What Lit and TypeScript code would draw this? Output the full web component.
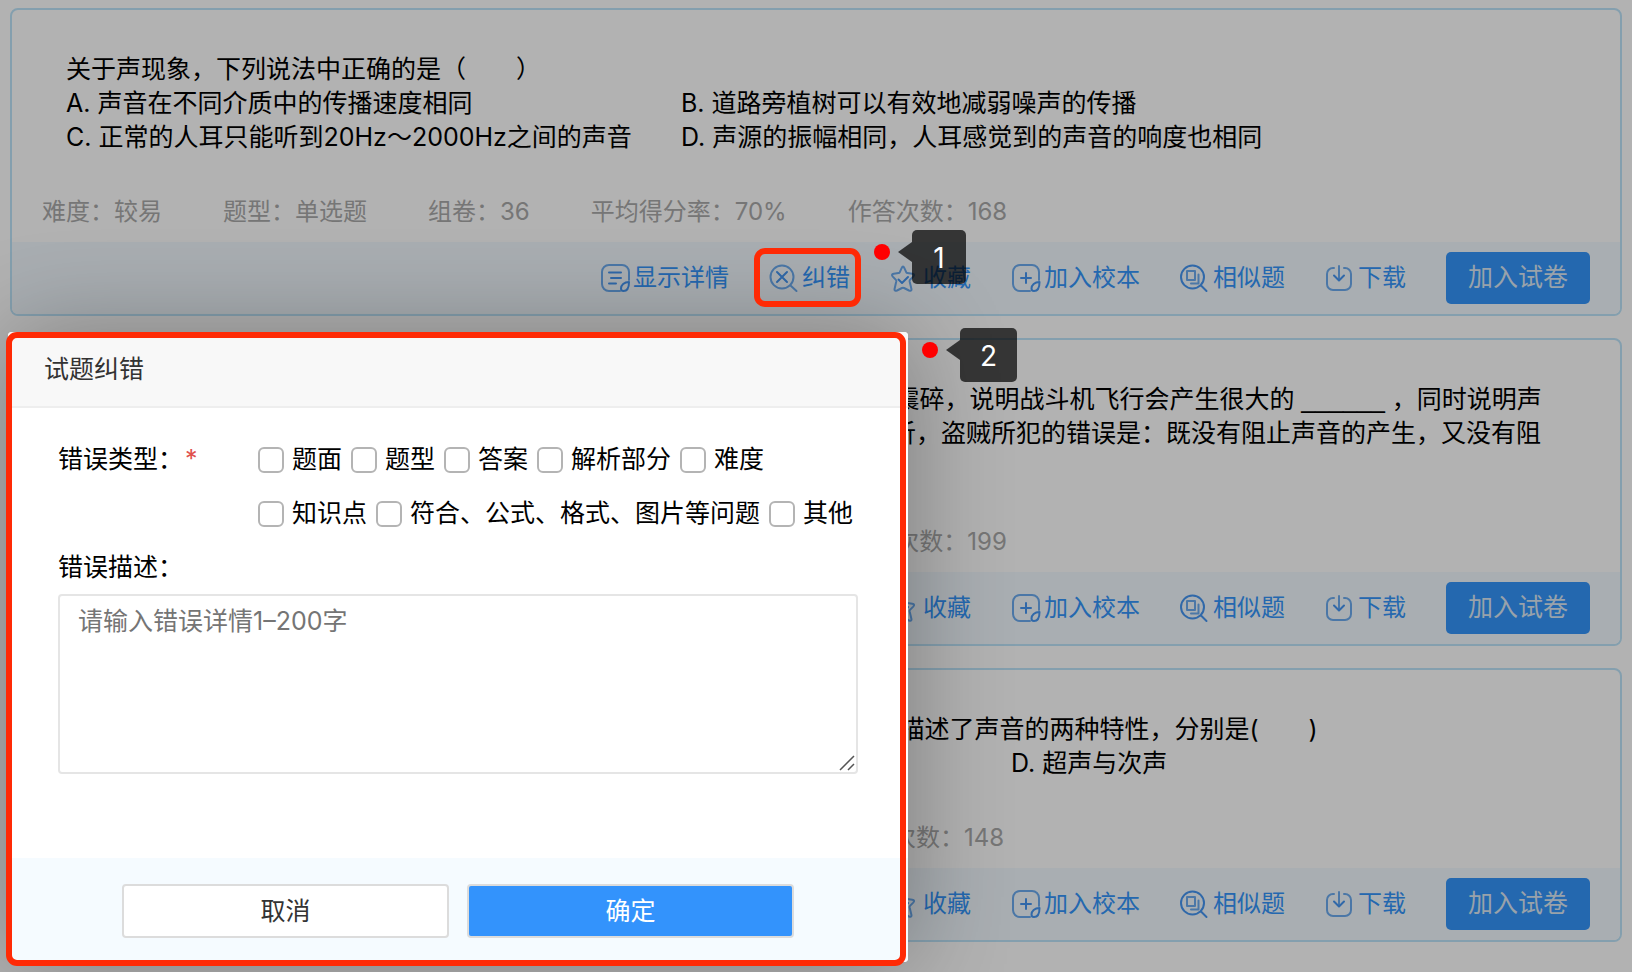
import { LitElement, html, svg, css } from "lit";
import { customElement, property } from "lit/decorators.js";

const glyphs: Record<string, unknown> = {
  detail: svg`
    <path d="M20 27H9a7 7 0 0 1-7-7V8a7 7 0 0 1 7-7h13a7 7 0 0 1 7 7v8" />
    <path class="strong" d="M9 8.500h12M11 14h10M9 19.500h7" />
    <path class="strong" d="M29 18c-5 0-8 3-8 6.500c0 1.500 1 2.500 2.500 2.500c3.500 0 5.500-3.500 5.500-9z" />`,
  wrong: svg`
    <circle cx="13" cy="13" r="11.500" />
    <path d="M21.500 21.500L27.500 27" />
    <path class="strong" d="M8 8l10 10M18 8L8 18" />`,
  star: svg`
    <path d="M11.600 4.200Q13 1 14.400 4.200L16.300 8.300Q16.600 9 17.400 9.100L22.300 9.700Q25.400 10.200 23.200 12.600L20 15.900Q19.500 16.400 19.600 17.200L21.500 25.200Q21.500 27.300 19 26.500L14 24Q13 23.500 12 24L7 26.500Q4.500 27.300 4.500 25.200L6.300 17.200Q6.400 16.400 5.900 15.900L2.800 12.600Q.800 10.200 3.700 9.700L8.600 9.100Q9.400 9 9.700 8.300Z" />
    <path class="strong" d="M8.500 15.500l3.500 3.500l6-6" />`,
  school: svg`
    <path d="M19 27H9a7 7 0 0 1-7-7V8a7 7 0 0 1 7-7h12a7 7 0 0 1 7 7v8" />
    <path class="strong" d="M15 9v10M10 14h10" />
    <path class="strong" d="M28.500 18c-5 0-8 3-8 6.500c0 1.500 1 2.500 2.500 2.500c3.500 0 5.500-3.500 5.500-9z" />`,
  similar: svg`
    <circle class="strong" cx="12.500" cy="13" r="11.500" />
    <path class="strong" d="M21 21.500L26.500 27" />
    <path d="M7 7h8v9H7zM11 19.500h7.500V10.500" />`,
  download: svg`
    <path d="M9 4H8a6 6 0 0 0-6 6v10a6 6 0 0 0 6 6h12a6 6 0 0 0 6-6V10a6 6 0 0 0-6-6h-1" />
    <path d="M14 2v13" />
    <path class="strong" d="M9 11.500l5 5l5-5" />`,
};

const actions: [string, string][] = [
  ["detail", "显示详情"],
  ["wrong", "纠错"],
  ["star", "收藏"],
  ["school", "加入校本"],
  ["similar", "相似题"],
  ["download", "下载"],
];

interface Question {
  lines: unknown[];
  options: string[];
  layout: string;
  stats: [string, string][];
}

const questions: Question[] = [
  {
    lines: ["关于声现象，下列说法中正确的是（　　）"],
    options: [
      "A. 声音在不同介质中的传播速度相同",
      "B. 道路旁植树可以有效地减弱噪声的传播",
      "C. 正常的人耳只能听到20Hz～2000Hz之间的声音",
      "D. 声源的振幅相同，人耳感觉到的声音的响度也相同",
    ],
    layout: "two",
    stats: [["难度", "较易"], ["题型", "单选题"], ["组卷", "36"], ["平均得分率", "70%"], ["作答次数", "168"]],
  },
  {
    lines: [
      html`(1)我国空军某型战斗机在超低空高速飞行时，会把沿途的房屋建筑物的玻璃震碎，说明战斗机飞行会产生很大的<span class="blank"> ______ </span>，同时说明声`,
      "音能够传递能量；掩耳盗铃是大家熟悉的成语故事，从物理学的角度进行分析，盗贼所犯的错误是：既没有阻止声音的产生，又没有阻",
      "止声音的传播，只是阻止声音进入自己的耳朵。",
    ],
    options: [],
    layout: "two",
    stats: [["难度", "较易"], ["题型", "填空题"], ["组卷", "28"], ["平均得分率", "72%"], ["作答次数", "199"]],
  },
  {
    lines: [
      "(2)成语震耳欲聋和尖锐刺耳都是日常生活中人们经常使用的词语，它们各自描述了声音的两种特性，分别是(　　)",
    ],
    options: ["A. 响度与音调", "B. 音调与音色", "C. 响度与音色", "D. 超声与次声"],
    layout: "four",
    stats: [["难度", "较易"], ["题型", "单选题"], ["组卷", "31"], ["平均得分率", "68%"], ["作答次数", "148"]],
  },
];

@customElement("question-card")
class QuestionCard extends LitElement {
  @property({ attribute: false }) question!: Question;

  static styles = css`
    :host {
      display: block;
      border: 2px solid #bde4fa;
      border-radius: 8px;
      overflow: hidden;
      background: #fff;
    }
    .stem {
      padding: 42px 54px 41px;
      font-size: 25px;
      line-height: 34px;
      color: #000;
    }
    .line {
      margin: 0;
      white-space: nowrap;
    }
    .blank { font-family: "Liberation Sans", sans-serif; }
    .options {
      display: grid;
      margin: 0;
      padding: 0;
      list-style: none;
      white-space: nowrap;
    }
    .two { grid-template-columns: 41% 1fr; }
    .four { grid-template-columns: repeat(4, 21%); }
    .stats {
      display: flex;
      gap: 61px;
      padding: 0 30px 13px;
      font-size: 24px;
      line-height: 34px;
      color: #aaa;
      white-space: nowrap;
    }
    .bar {
      display: flex;
      align-items: center;
      justify-content: flex-end;
      gap: 40px;
      padding: 10px 30px;
      background: #f3faff;
    }
    button {
      font: inherit;
      border: 0;
      padding: 0;
      cursor: pointer;
      white-space: nowrap;
    }
    .action {
      display: flex;
      align-items: center;
      gap: 5px;
      background: none;
      font-size: 24px;
      line-height: 34px;
      color: #3495fb;
    }
    .icon {
      width: 28px;
      height: 28px;
      overflow: visible;
      fill: none;
      stroke: #6cabef;
      stroke-width: 2;
      stroke-linecap: round;
      stroke-linejoin: round;
    }
    .strong { stroke: #4596f2; }
    .add {
      width: 144px;
      height: 52px;
      padding-bottom: 6px;
      border-radius: 5px;
      background: #3495fb;
      color: #dce8f4;
      font-size: 25px;
    }
  `;

  render() {
    const q = this.question;
    return html`
      <div class="stem">
        ${q.lines.map((line) => html`<p class="line">${line}</p>`)}
        ${q.options.length
          ? html`<ul class="options ${q.layout}">${q.options.map((o) => html`<li>${o}</li>`)}</ul>`
          : ""}
      </div>
      <div class="stats">${q.stats.map(([k, v]) => html`<span>${k}：${v}</span>`)}</div>
      <div class="bar">
        ${actions.map(
          ([icon, label]) => html`<button class="action" type="button">
            <svg class="icon" viewBox="0 0 28 28" aria-hidden="true">${glyphs[icon]}</svg>${label}
          </button>`
        )}
        <button class="add" type="button">加入试卷</button>
      </div>
    `;
  }
}

@customElement("report-dialog")
class ReportDialog extends LitElement {
  static styles = css`
    :host {
      display: block;
      background: #fff;
      border-radius: 4px;
      box-shadow: 2px 2px 100px rgba(0, 0, 0, 0.3);
      font-size: 25px;
    }
    .title {
      margin: 0;
      padding: 20px 36px;
      border-bottom: 2px solid #eee;
      border-radius: 4px 4px 0 0;
      background: #f8f8f8;
      color: #333;
      font-size: 25px;
      font-weight: 400;
      line-height: 34px;
    }
    .body {
      padding: 24px 50px 84px;
      line-height: 54px;
      color: #000;
    }
    .types {
      display: grid;
      grid-template-columns: 200px 1fr;
      margin: 0;
      padding: 0;
      border: 0;
    }
    .star {
      margin-left: 2px;
      color: #e0504d;
    }
    .row {
      display: flex;
      gap: 9px;
      white-space: nowrap;
    }
    .choice {
      display: flex;
      align-items: center;
      gap: 8px;
    }
    .box {
      appearance: none;
      box-sizing: border-box;
      width: 26px;
      height: 26px;
      margin: 2px 0 0;
      border: 2px solid #b4b4b4;
      border-radius: 6px;
      background: #fff;
    }
    .box:checked { background: #3495fb; }
    .caption { display: block; }
    .text {
      display: block;
      box-sizing: border-box;
      width: 100%;
      height: 180px;
      padding: 8px 18px;
      border: 2px solid #e5e5e5;
      border-radius: 4px;
      font: inherit;
      line-height: 34px;
      resize: none;
    }
    .text::placeholder { color: #757575; }
    .field { position: relative; }
    .grip {
      position: absolute;
      right: 3px;
      bottom: 3px;
      width: 16px;
      height: 16px;
      stroke: #555;
      stroke-width: 1.500;
      pointer-events: none;
    }
    .foot {
      display: flex;
      gap: 18px;
      padding: 26px 114px 24px;
      border-radius: 0 0 4px 4px;
      background: #f5fbff;
    }
    .btn {
      flex: 1;
      height: 54px;
      padding: 0 0 4px;
      border: 2px solid #dcdcdc;
      border-radius: 4px;
      background: #fff;
      color: #333;
      font: inherit;
      cursor: pointer;
    }
    .primary {
      background: #3393fc;
      color: #fff;
    }
  `;

  private choice(label: string) {
    return html`<label class="choice"><input class="box" type="checkbox" />${label}</label>`;
  }

  render() {
    return html`
      <h2 class="title">试题纠错</h2>
      <div class="body">
        <div class="types" role="group" aria-labelledby="kind">
          <span id="kind">错误类型：<span class="star">*</span></span>
          <div>
            <div class="row">${["题面", "题型", "答案", "解析部分", "难度"].map((t) => this.choice(t))}</div>
            <div class="row">${["知识点", "符合、公式、格式、图片等问题", "其他"].map((t) => this.choice(t))}</div>
          </div>
        </div>
        <label class="caption" for="text">错误描述：</label>
        <div class="field">
          <textarea class="text" id="text" placeholder="请输入错误详情1–200字"></textarea>
          <svg class="grip" viewBox="0 0 16 16" aria-hidden="true"><path d="M1 15L15 1M9 15l6-6" /></svg>
        </div>
      </div>
      <div class="foot">
        <button class="btn" type="button">取消</button>
        <button class="btn primary" type="button">确定</button>
      </div>
    `;
  }
}

@customElement("app-root")
class AppRoot extends LitElement {
  static styles = css`
    :host {
      display: block;
      position: relative;
      box-sizing: border-box;
      min-height: 100vh;
      overflow: hidden;
      background: #fff;
      font-family: Inter, "Noto Sans CJK SC", sans-serif;
    }
    .list {
      display: flex;
      flex-direction: column;
      gap: 22px;
      padding: 8px 10px 30px;
    }
    .shade {
      position: absolute;
      inset: 0;
      background: rgba(0, 0, 0, 0.3);
    }
    .dialog {
      position: absolute;
      left: 8px;
      top: 332px;
      width: 900px;
    }
    .frame {
      position: absolute;
      box-sizing: border-box;
      border: 6px solid #ff2a05;
      border-radius: 11px;
      pointer-events: none;
    }
    .frame-action {
      left: 754px;
      top: 248px;
      width: 107px;
      height: 59px;
    }
    .frame-dialog {
      left: 6px;
      top: 332px;
      width: 900px;
      height: 634px;
    }
    .note {
      position: absolute;
      display: flex;
    }
    .note-one { left: 874px; top: 230px; }
    .note-two { left: 922px; top: 328px; }
    .dot {
      width: 16px;
      height: 16px;
      margin: 14px 8px 0 0;
      border-radius: 50%;
      background: #f00;
    }
    .arrow {
      width: 14px;
      height: 20px;
      margin-top: 12px;
      background: rgba(0, 0, 0, 0.7);
      clip-path: polygon(100% 0, 0 50%, 100% 100%);
    }
    .bubble {
      min-width: 54px;
      height: 54px;
      box-sizing: border-box;
      padding: 0 20px;
      border-radius: 5px;
      background: rgba(0, 0, 0, 0.7);
      color: #fff;
      font-size: 28px;
      line-height: 56px;
      text-align: center;
    }
  `;

  render() {
    return html`
      <main class="list" lang="zh-CN">
        ${questions.map((q) => html`<question-card .question=${q}></question-card>`)}
      </main>
      <div class="shade"></div>
      <report-dialog class="dialog" lang="zh-CN" role="dialog" aria-label="试题纠错"></report-dialog>
      <div class="frame frame-action"></div>
      <div class="frame frame-dialog"></div>
      <div class="note note-one"><span class="dot"></span><span class="arrow"></span><span class="bubble">1</span></div>
      <div class="note note-two"><span class="dot"></span><span class="arrow"></span><span class="bubble">2</span></div>
    `;
  }
}
